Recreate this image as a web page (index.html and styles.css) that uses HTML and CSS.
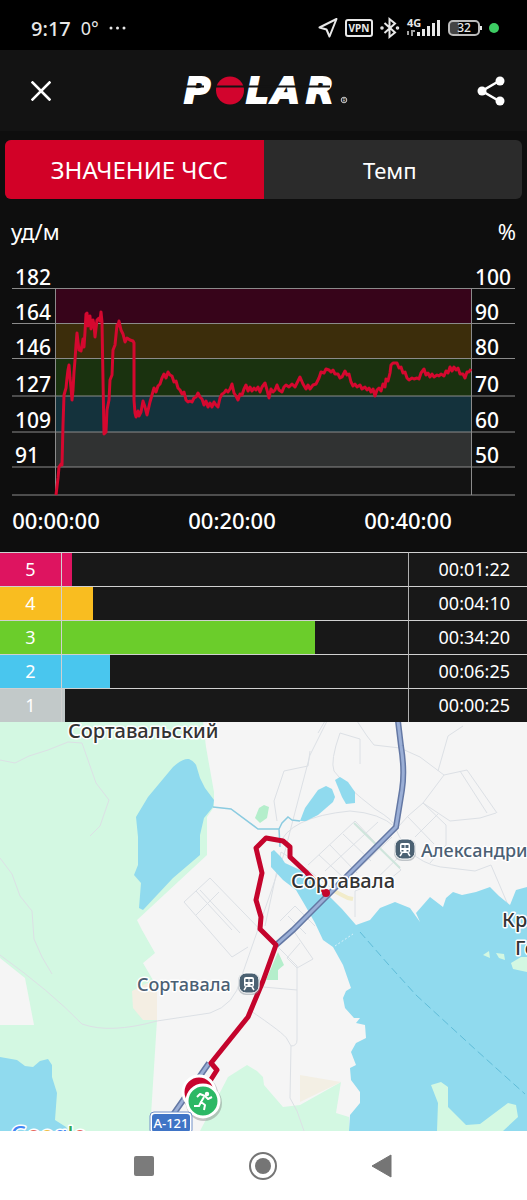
FILE: index.html
```html
<!DOCTYPE html>
<html lang="ru">

<head>
    <meta charset="UTF-8">
    <meta name="viewport" content="width=device-width, initial-scale=1.0">
    <title>Polar</title>
    <link rel="stylesheet" href="styles.css">
</head>

<body>

    <!-- status bar -->
    <div class="status">
        <div class="status-left">
            <span class="clock">9:17</span>
            <span class="temp">0°</span>
            <svg width="18" height="4" viewBox="0 0 18 4" fill="#e8e8e8">
                <circle cx="2" cy="2" r="1.5" />
                <circle cx="8.500" cy="2" r="1.500" />
                <circle cx="15" cy="2" r="1.500" />
            </svg>
        </div>
        <div class="status-right">
            <svg width="20" height="22" viewBox="0 0 20 22" fill="none" stroke="#e8e8e8" stroke-width="2" stroke-linejoin="round">
                <path d="M18.500 2 L1.500 10.500 L8.500 12.500 L11.500 19.500 Z" />
            </svg>
            <svg width="28" height="18" viewBox="0 0 28 18">
                <rect x="1" y="1" width="26" height="16" rx="2" fill="none" stroke="#e8e8e8" stroke-width="2" />
                <text x="14" y="13" text-anchor="middle" class="tiny">VPN</text>
            </svg>
            <svg width="20" height="22" viewBox="0 0 20 22" fill="none" stroke="#e8e8e8" stroke-width="2">
                <path d="M4.500 6 L15 15.500 L9.500 20 V2 L15 6.500 L4.500 16" />
                <circle cx="2" cy="11" r=".8" />
                <circle cx="17.500" cy="11" r=".8" />
            </svg>
            <svg width="34" height="20" viewBox="0 0 34 20" fill="#e8e8e8">
                <text x="0" y="9" class="tiny net">4G</text>
                <path d="M0 13h2v4H0zM4 12h4v2H6v4H4z" opacity=".7" />
                <path d="M10 14h3v4h-3zM15 11h3v7h-3zM20 8h3v10h-3zM25 5h3v13h-3zM30 2h3v16h-3z" />
            </svg>
            <svg width="34" height="18" viewBox="0 0 34 18">
                <path d="M2 3h9v12H2z" fill="#444" />
                <rect x="1" y="2" width="30" height="14" rx="4" fill="none" stroke="#bbb" stroke-width="2" />
                <path d="M33 7v4" stroke="#e8e8e8" stroke-width="2" />
                <text x="16" y="13" text-anchor="middle" class="battery">32</text>
            </svg>
            <span class="dot"></span>
        </div>
    </div>

    <header class="header">
        <button class="icon-btn" aria-label="Закрыть">
            <svg width="20" height="20" viewBox="0 0 20 20" stroke="#fff" stroke-width="2.600" stroke-linecap="square">
                <path d="M1.500 1.500 L18.500 18.500 M18.500 1.500 L1.500 18.500" />
            </svg>
        </button>
        <svg class="logo" width="168" height="30" viewBox="0 0 168 30" role="img" aria-label="Polar">
            <g class="logo-text">
                <text x="2" y="27">P</text>
                <text x="64" y="27">L</text>
                <text x="90" y="27">A</text>
                <text x="124" y="27">R</text>
            </g>
            <circle cx="48" cy="14.500" r="14" fill="#d2042d" />
            <path d="M0 10.500 H22 M34 10.500 H148" stroke="#131313" stroke-width="2" />
            <circle cx="162" cy="24" r="2.800" fill="none" stroke="#ccc" />
            <text x="162" y="26" text-anchor="middle" class="reg">R</text>
        </svg>
        <button class="icon-btn" aria-label="Поделиться">
            <svg width="28" height="30" viewBox="0 0 28 30" fill="#fff">
                <path d="M23 4.500 L5 15 L23 25.500" fill="none" stroke="#fff" stroke-width="2.600" />
                <circle cx="23" cy="5" r="4.500" />
                <circle cx="5" cy="15" r="4.500" />
                <circle cx="23" cy="25" r="4.500" />
            </svg>
        </button>
    </header>

    <div class="tabs">
        <button class="tab active">ЗНАЧЕНИЕ ЧСС</button>
        <button class="tab">Темп</button>
    </div>

    <div class="units">
        <span>уд/м</span>
        <span>%</span>
    </div>

    <!-- heart rate chart -->
    <svg class="chart" viewBox="0 0 527 292">
        <rect x="56" y="28" width="415" height="35" fill="#37041a" />
        <rect x="56" y="63" width="415" height="35" fill="#3c2d0b" />
        <rect x="56" y="98" width="415" height="38" fill="#1a320f" />
        <rect x="56" y="136" width="415" height="36" fill="#14323c" />
        <rect x="56" y="172" width="415" height="35" fill="#303232" />
        <rect x="56" y="207" width="415" height="28" fill="#131313" />
        <path class="lines" d="M12 28.500H515M12 63.500H515M12 98.500H515M12 136H515M12 172H515M12 207H515M12 235H515M55.500 28V235M471.500 28V235" />
        <polyline class="pulse" points="56,235 58,218 59,207 61,204 62,205 63,165 64,135 66,128 67,118 68,110 69,105 70,118 71,128 72,140 73,130 74,112 75,100 76,85 77,73 78,82 79,90 81,91 83,79 84,87 85,72 86,54 87,53 88,66 90,56 91,69 93,60 94,65 95,77 97,60 99,58 100,61 101,52 102,62 103,120 104,174 106,172 107,150 109,140 110,120 112,115 113,90 115,85 117,65 118,66 119,61 121,70 123,74 125,82 127,78 130,80 133,81 134,83 134,140 135,153 136,157 138,151 139,156 141,152 143,141 145,147 147,155 150,142 152,135 154,128 156,132 158,126 160,124 162,118 164,114 166,118 168,112 170,115 172,116 174,122 176,121 178,128 180,130 182,134 184,132 186,140 188,142 190,141 192,142 194,138 196,137 198,133 200,137 202,139 204,145 206,141 208,147 210,143 212,147 214,142 216,145 218,147 220,138 222,134 224,133 226,130 228,132 230,129 232,124 234,133 236,136 238,140 240,134 242,135 244,129 246,125 248,131 250,127 252,131 254,128 256,130 258,127 260,132 262,127 265,123 267,130 269,138 271,129 273,132 275,130 277,125 279,130 282,132 284,127 286,125 289,127 292,124 295,127 298,121 300,117 303,124 306,129 308,125 310,129 313,125 316,124 319,118 321,112 324,113 326,109 329,110 331,112 333,110 335,114 338,114 340,118 342,117 345,111 347,115 349,114 351,122 353,126 355,124 357,127 360,125 362,129 365,127 367,130 369,128 371,132 373,129 375,136 377,130 379,128 381,131 383,124 385,127 386,119 388,121 390,113 391,105 393,103 397,103 399,108 401,107 403,113 405,112 407,118 409,120 412,118 414,119 417,118 419,119 421,113 424,109 426,115 428,113 430,117 432,114 434,117 437,115 439,116 441,114 444,116 446,111 448,113 450,107 452,111 454,107 456,110 458,108 460,114 463,114 465,118 467,112 469,112 471,109" />
        <g class="axis">
            <text x="15" y="25">182</text>
            <text x="15" y="60">164</text>
            <text x="15" y="95">146</text>
            <text x="15" y="132">127</text>
            <text x="15" y="168">109</text>
            <text x="15" y="203">91</text>
            <text x="475" y="25">100</text>
            <text x="475" y="60">90</text>
            <text x="475" y="95">80</text>
            <text x="475" y="132">70</text>
            <text x="475" y="168">60</text>
            <text x="475" y="203">50</text>
        </g>
        <g class="axis time">
            <text x="56" y="269">00:00:00</text>
            <text x="232" y="269">00:20:00</text>
            <text x="408" y="269">00:40:00</text>
        </g>
    </svg>

    <!-- time in zones -->
    <table class="zones">
        <tr class="z5">
            <th scope="row">5</th>
            <td><div class="bar" style="width: 3%"></div></td>
            <td class="dur">00:01:22</td>
        </tr>
        <tr class="z4">
            <th scope="row">4</th>
            <td><div class="bar" style="width: 9%"></div></td>
            <td class="dur">00:04:10</td>
        </tr>
        <tr class="z3">
            <th scope="row">3</th>
            <td><div class="bar" style="width: 73%"></div></td>
            <td class="dur">00:34:20</td>
        </tr>
        <tr class="z2">
            <th scope="row">2</th>
            <td><div class="bar" style="width: 14%"></div></td>
            <td class="dur">00:06:25</td>
        </tr>
        <tr class="z1">
            <th scope="row">1</th>
            <td><div class="bar" style="width: 1%"></div></td>
            <td class="dur">00:00:25</td>
        </tr>
    </table>

    <!-- map -->
    <svg class="map" viewBox="0 1 527 409">
        <defs>
            <g id="station">
                <rect x="-11" y="-10" width="22" height="22" rx="8" fill="#8a949c" opacity=".5" />
                <rect x="-10" y="-10" width="20" height="20" rx="7" fill="#4b6172" stroke="#fff" />
                <rect x="-5" y="-6" width="10" height="10" rx="2" fill="#fff" />
                <path d="M-3 4 l-2 3 M3 4 l2 3" stroke="#fff" stroke-width="1.500" />
                <path d="M-3.500 -4h3v3h-3zM.5 -4h3v3h-3zM-3.500 1h2v1.500h-2zM1.500 1h2v1.500h-2z" fill="#4b6172" />
            </g>
            <path id="road" d="M398 0L401 25Q405 50 402 69L396 106L353 149L326 176L310 192L293 209L276 224M209 342L170 398" />
        </defs>
        <rect width="527" height="410" fill="#f5f5f5" />
        <!-- forests -->
        <g fill="#d3f8e2">
            <path d="M0 0H203L206 26L214 71V86L207 96V134L137 199L142 209L155 232L143 242L157 266V299L150 410H0Z" />
            <path d="M263 356L264 364L283 386L300 384L341 361L336 392L349 396V410H200L228 356L247 344L257 350Z" />
        </g>
        <path d="M0 237L25 257L34 304H0Z" fill="#f5f5f5" />
        <path d="M132 270L133 287L143 299H157V266L147 262Z" fill="#f4eee3" />
        <path d="M300 354L341 361L300 381Z" fill="#f3efe4" />
        <path d="M255 97L259 87L264 84L269 86L267 97L260 102Z" fill="#b4eecb" />
        <path d="M278 231L284 244L278 249V259H266Z" fill="#b4eecb" />
        <!-- small roads -->
        <g class="roads">
            <path d="M0 39L15 42L29 35L48 29L68 21L82 22L96 62L109 79L100 105L90 115M0 137L12 153L20 175L32 190L34 218L42 236L52 253" />
            <path d="M0 234Q50 270 82 303Q110 313 157 300L210 292Q235 284 241 257L256 214L285 130L294 95L310 34L327 0" />
            <path d="M318 12L325 0H357L367 15L374 24L400 27L420 36L444 54L467 49L497 92M438 50L448 15L463 5M375 88Q395 100 395 106M340 12Q330 40 334 50Q345 65 375 88M340 12L360 18V43" />
            <path d="M310 30L308 45Q298 47 284 50L274 80L277 100M279 125Q288 96 350 90Q380 92 395 106Q410 145 450 147L475 150L491 144L500 165L508 184" />
            <path d="M444 54L423 82L408 95L399 105M423 82L450 100L480 97L496 92M460 50L487 92M423 82L446 104V124L430 142M408 96L434 123M438 93L415 116" />
            <path d="M308 144L355 100L401 149L390 158M319 134L345 158M330 124L357 152M343 113L371 140M378 101L325 150M392 116L350 156M405 130L370 164L355 170V196" />
            <path d="M184 181L210 157L276 225M184 181L232 236L248 226M196 194L219 171M196 170L232 209M200 169L240 212M293 209L313 238L297 247L287 237L300 222M280 200L295 185L315 205M288 195L306 213" />
            <path d="M276 224L297 245V269V319Q297 325 291 325L287 318Q285 313 248 288M263 266L297 269M291 325L290 377L297 390L304 410M281 131Q300 142 330 166M281 131L265 205" />
        </g>
        <path d="M354 102L400 147" stroke="#cfe5dc" stroke-width="2" />
        <path d="M334 170L348 177L353 178" stroke="#f2ecca" stroke-width="4" fill="none" />
        <!-- water -->
        <g fill="#90daee">
            <path d="M173 46Q183 37 189 38Q196 41 197 47L200 57L205 67L214 79L213 86L204 97L200 114V134L173 157L143 189L139 187L141 162L134 154L138 144V116L136 96L148 76Z" />
            <path d="M300 100L305 87L318 69L326 65L332 68L335 76L333 81L318 94L306 100Z" />
            <path d="M335 59L340 56L348 61L355 71V82L346 83L342 76Z" />
            <path d="M271 131L274 129L281 136L285 142L300 149L311 153L326 172L342 188L356 204L370 199L380 187L395 181L410 187L420 201L416 192L430 176L443 186L446 177L453 171L462 174L476 171L490 166L499 175L510 184L516 169L527 166V410H349L350 394L360 382V371L351 359L350 347L356 344L351 331L356 322L366 317L365 304L356 302L360 297L354 297L345 287L343 277L346 270L351 267L343 244L333 226L323 219L315 202L306 186L296 169L283 159L271 146Z" />
            <path d="M0 336L17 339L25 345L33 346L40 340L48 338L52 344V356L57 372L55 399L66 406L69 410H0Z" />
        </g>
        <path d="M213 86L231 88L258 108L279 108L282 102L288 96L292 99L300 100M279 108L280 126" fill="none" stroke="#8bcbe0" stroke-width="1.500" />
        <g fill="#d3f8e2">
            <path d="M431 364L441 361L448 366V386L466 404L480 403L496 391L508 382L516 384L518 396L503 410H437L438 382Z" />
            <path d="M511 242L521 236H527V251L513 248Z" />
            <path d="M483 234L489 230L490 237ZM496 232L504 233L505 239L499 237Z" />
        </g>
        <path d="M360 211L388 243L416 274L476 329L525 373" fill="none" stroke="#5fbcd8" stroke-width="1" stroke-dasharray="8 4" />
        <path d="M335 225L353 213" stroke="#d8f2fa" stroke-dasharray="2 2" />
        <!-- highway -->
        <use href="#road" class="road-edge" />
        <use href="#road" class="road-fill" />
        <!-- workout track -->
        <path class="track" d="M326 172L306 151L290 136V126L283 120L266 117L256 127L262 152L256 179L261 196L260 208L276 224L263 260L248 296L211 342L217 349L210 360" />
        <circle cx="326" cy="172" r="4" fill="#c4042c" />
        <use href="#station" x="405" y="128" />
        <use href="#station" x="249" y="262" />
        <circle cx="200" cy="373" r="18" fill="#777" opacity=".35" />
        <circle cx="199" cy="371" r="16" fill="#c8042d" stroke="#fff" stroke-width="3" />
        <circle cx="204" cy="382" r="18" fill="#777" opacity=".4" />
        <circle cx="203" cy="380" r="16" fill="#2cb865" stroke="#fff" stroke-width="3" />
        <circle cx="207" cy="373" r="2.200" fill="#fff" />
        <path d="M197 376L200 373L205 375L208 378L212 376M204 376L201 381L205 384L204 389M201 381L199 385L194 385" fill="none" stroke="#fff" stroke-width="2" stroke-linejoin="round" />
        <rect x="150" y="391" width="42" height="22" rx="4" fill="#fff" stroke="#7090c8" />
        <rect x="152" y="393" width="38" height="18" rx="3" fill="#3f74c6" />
        <g class="labels">
            <text x="68" y="17" class="big">Сортавальский</text>
            <text x="291" y="167" class="big">Сортавала</text>
            <text x="502" y="206" class="big">Кр</text>
            <text x="515" y="234" class="big">Ге</text>
            <text x="137" y="270">Сортавала</text>
            <text x="421" y="136">Александрия</text>
            <text x="11" y="421" class="google"><tspan fill="#4285f4">G</tspan><tspan fill="#e8685d">o</tspan><tspan fill="#f0c04a">o</tspan><tspan fill="#4285f4">g</tspan><tspan fill="#34a853">l</tspan><tspan fill="#e8685d">e</tspan></text>
        </g>
        <text x="171" y="407" text-anchor="middle" class="shield">А-121</text>
    </svg>

    <!-- system buttons -->
    <nav class="nav">
        <button aria-label="Недавние">
            <svg width="22" height="22" viewBox="0 0 22 22"><rect x="1" y="1" width="20" height="20" rx="2" fill="#7b7b7b" /></svg>
        </button>
        <button aria-label="Домой">
            <svg width="30" height="30" viewBox="0 0 30 30">
                <circle cx="15" cy="15" r="13" fill="none" stroke="#757575" stroke-width="2" />
                <circle cx="15" cy="15" r="8" fill="#757575" />
            </svg>
        </button>
        <button aria-label="Назад">
            <svg width="22" height="26" viewBox="0 0 22 26"><path d="M1 13L20 2V24Z" fill="#757575" stroke="#757575" stroke-linejoin="round" /></svg>
        </button>
    </nav>

</body>

</html>
```

FILE: styles.css
```css
* {
    box-sizing: border-box;
}

body {
    margin: 0;
    min-height: 100vh;
    display: flex;
    flex-direction: column;
    background-color: #0e0e0e;
    color: #fff;
    font-family: "Noto Sans", "Open Sans", sans-serif;
}

button {
    padding: 0;
    border: 0;
    background: none;
    color: inherit;
    font-family: inherit;
    cursor: pointer;
}

svg {
    display: block;
}

.status svg,
.logo {
    overflow: visible;
}

/* status bar */
.status {
    display: flex;
    justify-content: space-between;
    align-items: center;
    height: 50px;
    padding: 6px 28px 0 31px;
    background-color: #000;
    color: #e8e8e8;
}

.status-left,
.status-right {
    display: flex;
    align-items: center;
}

.status-left {
    gap: 10px;
}

.status-right {
    gap: 7px;
}

.clock {
    font-size: 20px;
    font-weight: 500;
}

.temp {
    font-size: 18px;
}

.tiny {
    fill: #e8e8e8;
    font-size: 10px;
    font-weight: 700;
}

.net {
    font-size: 11px;
}

.battery {
    fill: #e8e8e8;
    font-size: 12px;
    font-weight: 500;
}

.dot {
    width: 10px;
    height: 10px;
    border-radius: 50%;
    background-color: #3dcc63;
}

/* header */
.header {
    display: flex;
    justify-content: space-between;
    align-items: center;
    height: 81px;
    padding: 0 16px 0 21px;
    background-color: #131313;
}

.icon-btn {
    display: flex;
    justify-content: center;
    align-items: center;
    width: 40px;
    height: 40px;
}

.logo-text {
    fill: #fff;
    stroke: #fff;
    stroke-width: 2px;
    font-family: "DejaVu Sans", sans-serif;
    font-size: 36px;
    font-weight: 700;
    font-style: italic;
}

.reg {
    fill: #ccc;
    font-size: 5px;
}

/* tabs */
.tabs {
    display: flex;
    height: 59px;
    margin: 9px 5px 0;
    border-radius: 6px;
    overflow: hidden;
    background-color: #2b2b2b;
}

.tab {
    width: 50%;
    padding-right: 6px;
    font-size: 22px;
}

.active {
    padding: 0 0 0 10px;
    background-color: #d20127;
    font-size: 24px;
}

.units {
    display: flex;
    justify-content: space-between;
    padding: 17px 11px 13px;
    font-size: 22px;
    line-height: 31px;
}

/* chart */
.chart {
    width: 100%;
}

.lines {
    stroke: #8b8b8b;
    stroke-width: 1;
}

.pulse {
    fill: none;
    stroke: #d5082f;
    stroke-width: 3;
    stroke-linejoin: round;
}

.axis {
    fill: #fff;
    font-size: 21px;
    font-weight: 500;
}

.time {
    font-size: 22px;
    text-anchor: middle;
}

/* zones */
.zones {
    width: 100%;
    table-layout: fixed;
    border-spacing: 0;
    background-color: #181818;
    font-size: 18px;
}

.zones th,
.zones td {
    height: 34px;
    padding: 0;
    border-top: 1px solid #d0d0d0;
    line-height: 33px;
}

.zones th {
    width: 62px;
    border-right: 1px solid #d0d0d0;
    font-weight: 400;
}

.bar {
    height: 33px;
}

.zones .dur {
    width: 119px;
    padding-right: 17px;
    border-left: 1px solid #b0b0b0;
    text-align: right;
}

.z5 th, .z5 .bar {
    background-color: #de1460;
}

.z4 th, .z4 .bar {
    background-color: #f9bd20;
}

.z3 th, .z3 .bar {
    background-color: #6bcd2b;
}

.z2 th, .z2 .bar {
    background-color: #49c6ee;
}

.z1 th, .z1 .bar {
    background-color: #c2c9c9;
}

/* map */
.map {
    width: 100%;
}

.roads {
    fill: none;
    stroke: #dce0e5;
    stroke-width: 1;
}

.road-edge {
    fill: none;
    stroke: #6478a4;
    stroke-width: 6;
}

.road-fill {
    fill: none;
    stroke: #9bafd6;
    stroke-width: 3;
}

.track {
    fill: none;
    stroke: #c4042c;
    stroke-width: 5;
    stroke-linejoin: round;
}

.labels {
    fill: #4b6074;
    stroke: #fff;
    stroke-width: 3px;
    stroke-linejoin: round;
    paint-order: stroke;
    font-size: 18px;
    font-weight: 500;
}

.big {
    fill: #333;
    font-size: 20px;
}

.google {
    font-size: 22px;
}

.shield {
    fill: #fff;
    font-size: 13px;
    font-weight: 500;
}

/* bottom buttons */
.nav {
    flex: 1;
    display: flex;
    justify-content: center;
    align-items: center;
    gap: 79px;
    min-height: 69px;
    padding-right: 2px;
    background-color: #fff;
}

.nav button {
    display: flex;
    justify-content: center;
    width: 40px;
}
```
